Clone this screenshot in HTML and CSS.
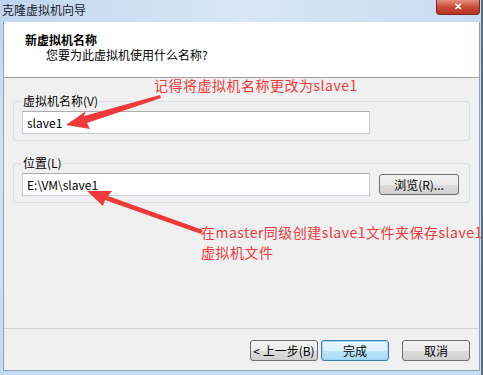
FILE: index.html
```html
<!DOCTYPE html>
<html lang="zh-CN">
<head>
    <meta charset="UTF-8">
    <title>克隆虚拟机向导</title>
    <link rel="stylesheet" href="styles.css">
</head>
<body>
    <div class="window">
        <div class="titlebar">
            <span class="title">克隆虚拟机向导</span>
            <button class="close-btn">&#x2715;</button>
        </div>

        <div class="client">
            <div class="header">
                <div class="header-title">新虚拟机名称</div>
                <div class="header-sub">您要为此虚拟机使用什么名称?</div>
            </div>

            <div class="content">
                <fieldset class="group">
                    <legend>虚拟机名称(V)</legend>
                    <div class="row">
                        <input class="field" type="text" value="slave1">
                    </div>
                </fieldset>

                <fieldset class="group">
                    <legend>位置(L)</legend>
                    <div class="row">
                        <input class="field" type="text" value="E:\VM\slave1">
                        <button class="btn browse">浏览(R)...</button>
                    </div>
                </fieldset>
            </div>

            <div class="footer">
                <button class="btn back">&lt; 上一步(B)</button>
                <button class="btn primary">完成</button>
                <button class="btn cancel">取消</button>
            </div>
        </div>

        <!-- annotation layer drawn over the dialog -->
        <div class="note note-1">记得将虚拟机名称更改为slave1</div>
        <div class="note note-2">在master同级创建slave1文件夹保存slave1<br>虚拟机文件</div>
        <svg class="arrows" width="483" height="375" viewBox="0 0 483 375">
            <path d="M160 95 L84 116 L86 111 L66 125 L90 129 L87 123 L161 98 Z" fill="#f03a3a"/>
            <path d="M203 230 L108 196 L112 191 L87 191 L103 206 L105 200 L201 234 Z" fill="#f03a3a"/>
        </svg>
    </div>
</body>
</html>
```

FILE: styles.css
```css
* {
    box-sizing: border-box;
}

body {
    margin: 0;
    font-family: "Noto Sans CJK SC", "Liberation Sans", sans-serif;
    font-size: 12px;
    color: #000;
    background: #fff;
}

.window {
    position: relative;
    width: 483px;
    height: 375px;
    overflow: hidden;
    background: linear-gradient(to bottom, #bcd4ee 0%, #d3e3f5 40%, #c6daf1 100%);
    border-right: 2px solid #5f6f80;
    display: flex;
    flex-direction: column;
}

.titlebar {
    height: 22px;
    display: flex;
    align-items: flex-start;
    justify-content: space-between;
    background: linear-gradient(to right, #c1d6ee 0%, #d9e7f6 50%, #c8dbf0 100%);
}

.title {
    padding: 2px 0 0 2px;
    font-size: 12px;
    line-height: 16px;
    color: #18212c;
}

.close-btn {
    width: 44px;
    height: 15px;
    margin-right: 1px;
    border: 1px solid #7a2a22;
    border-top: none;
    border-radius: 0 0 4px 4px;
    background: linear-gradient(to bottom, #e4917e 0%, #cc4b38 50%, #b73421 100%);
    color: #fff;
    font-size: 10px;
    font-weight: bold;
    line-height: 12px;
    padding: 0;
}

.client {
    flex: 1;
    margin: 0 1px 4px 3px;
    background: #f0f0f0;
    border: 1px solid #8ea4bd;
    border-top: none;
    display: flex;
    flex-direction: column;
}

.header {
    height: 56px;
    background: #fff;
    border-bottom: 1px solid #a0a0a0;
    padding: 10px 0 0 21px;
}

.header-title {
    font-weight: bold;
    line-height: 16px;
}

.header-sub {
    padding-left: 21px;
    line-height: 14px;
}

.content {
    flex: 1;
    padding: 15px 9px 0 9px;
    display: flex;
    flex-direction: column;
    gap: 14px;
}

.group {
    margin: 0;
    padding: 2px 8px 6px 8px;
    border: 1px solid #d5dfe5;
    border-radius: 3px;
}

.group legend {
    padding: 0 1px;
    line-height: 16px;
}

.row {
    display: flex;
    align-items: center;
    gap: 9px;
}

.field {
    width: 348px;
    height: 23px;
    border: 1px solid #c5d0da;
    border-top-color: #abadb3;
    padding: 0 4px;
    font-family: "Noto Sans CJK SC", "Liberation Sans", sans-serif;
    font-size: 12px;
    background: #fff;
    color: #000;
}

.btn {
    height: 21px;
    border: 1px solid #707070;
    border-radius: 3px;
    background: linear-gradient(to bottom, #f2f2f2 0%, #ebebeb 50%, #dddddd 51%, #cfcfcf 100%);
    font-family: "Noto Sans CJK SC", "Liberation Sans", sans-serif;
    font-size: 12px;
    line-height: 17px;
    padding: 0;
    color: #000;
}

.browse {
    width: 80px;
}

.footer {
    height: 42px;
    border-top: 1px solid #d0d0d0;
    display: flex;
    align-items: center;
    justify-content: flex-end;
    padding: 2px 9px 0 0;
}

.back {
    width: 68px;
    margin-right: 3px;
}

.primary {
    width: 68px;
    border-color: #3c7fb1;
    background: linear-gradient(to bottom, #eaf6fd 0%, #d9f0fc 50%, #bee6fd 51%, #a7d9f5 100%);
    box-shadow: inset 0 0 0 1px #9dd6f7;
}

.cancel {
    width: 68px;
    margin-left: 13px;
}

.note {
    position: absolute;
    font-family: "Noto Sans CJK SC", "Liberation Sans", sans-serif;
    font-size: 14px;
    line-height: 20px;
    letter-spacing: 0.5px;
    color: #f03a3a;
    white-space: nowrap;
}

.note-1 {
    left: 154px;
    top: 75px;
}

.note-2 {
    left: 201px;
    top: 222px;
}

.arrows {
    position: absolute;
    left: 0;
    top: 0;
    pointer-events: none;
}
```
